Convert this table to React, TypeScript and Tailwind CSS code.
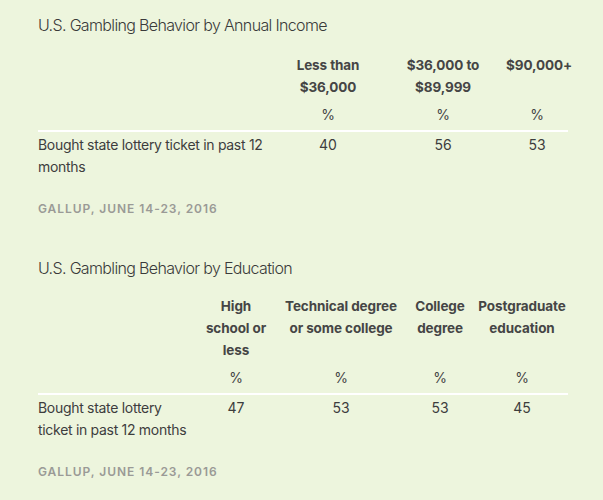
import React from 'react';

interface Table {
  title: string;
  cols: string;
  gap: string;
  headers: string[][];
  label: string[];
  values: string[];
}

const tables: Table[] = [
  {
    title: 'U.S. Gambling Behavior by Annual Income',
    cols: 'grid-cols-[238px_104px_126px_62px]',
    gap: 'mt-[17px]',
    headers: [['Less than', '$36,000'], ['$36,000 to', '$89,999'], ['$90,000+']],
    label: ['Bought state lottery ticket in past 12', 'months'],
    values: ['40', '56', '53']
  },
  {
    title: 'U.S. Gambling Behavior by Education',
    cols: 'grid-cols-[156px_84px_126px_72px_92px]',
    gap: 'mt-[15px]',
    headers: [
      ['High', 'school or', 'less'],
      ['Technical degree', 'or some college'],
      ['College', 'degree'],
      ['Postgraduate', 'education']
    ],
    label: ['Bought state lottery', 'ticket in past 12 months'],
    values: ['47', '53', '53', '45']
  }
];

const GamblingTable = ({ table }: { table: Table }) => {
  return (
    <div>
      <h2 className="text-[16px] leading-6 font-light text-[#3a3a3a] tracking-[-0.65px]">{table.title}</h2>

      <div className={`grid ${table.cols} ${table.gap}`}>
        {/* Header row */}
        <div />
        {table.headers.map((h, i) => (
          <div key={i} className="text-center text-[13.5px] leading-[22px] font-bold text-[#454545] tracking-[-0.1px]">
            {h.map((line) => (
              <div key={line} className="whitespace-nowrap">{line}</div>
            ))}
          </div>
        ))}

        {/* Percent row */}
        <div className="border-b-2 border-white pb-1 mt-1.5" />
        {table.headers.map((_, i) => (
          <div key={i} className="border-b-2 border-white pb-1 mt-1.5 text-center text-[14px] leading-[22px] text-[#454545]">
            %
          </div>
        ))}

        {/* Data row */}
        <div className="pt-0.5 text-[14px] leading-[22px] text-[#3d3d3d] tracking-[-0.3px]">
          {table.label.map((line) => (
            <div key={line} className="whitespace-nowrap">{line}</div>
          ))}
        </div>
        {table.values.map((v, i) => (
          <div key={i} className="pt-0.5 text-center text-[14px] leading-[22px] text-[#3d3d3d]">
            {v}
          </div>
        ))}
      </div>

      <p className="mt-[23px] text-[12px] leading-4 font-semibold tracking-[0.95px] text-[#9a9a96]">
        GALLUP, JUNE 14-23, 2016
      </p>
    </div>
  );
};

const App = () => {
  return (
    <div
      className="w-[603px] h-[500px] bg-[#edf5dd] pl-[38px] pt-[13px] overflow-hidden"
      style={{ fontFamily: 'Inter, "Liberation Sans", sans-serif' }}
    >
      <div className="w-[530px] flex flex-col gap-[39px]">
        {tables.map((t) => (
          <GamblingTable key={t.title} table={t} />
        ))}
      </div>
    </div>
  );
};

export default App;
